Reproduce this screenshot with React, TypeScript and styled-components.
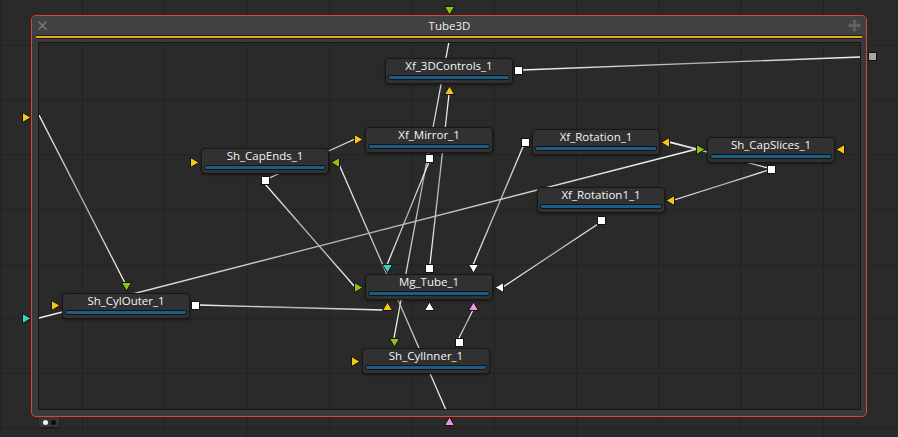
import React from 'react'
import styled, { createGlobalStyle } from 'styled-components'

// page coords of the inner (padding box) origin of the group
const OX = 39
const OY = 43

const GlobalStyle = createGlobalStyle`
  html, body {
    margin: 0;
    padding: 0;
    background: #2a2a2a;
  }
  body {
    font-family: 'Open Sans', 'Noto Sans', sans-serif;
  }
`

const gridBg = `
  background-color: #2a2a2a;
  background-image: linear-gradient(to right, #222222 1px, transparent 1px),
    linear-gradient(to bottom, #222222 1px, transparent 1px);
  background-size: 82.33px 54.7px;
`

const Canvas = styled.div`
  position: relative;
  width: 898px;
  height: 437px;
  overflow: hidden;
  ${gridBg}
  background-position: 82px 45px;
`

const GroupFrame = styled.div`
  position: absolute;
  left: 31px;
  top: 15px;
  width: 836px;
  height: 402px;
  box-sizing: border-box;
  display: flex;
  flex-direction: column;
  border: 1px solid #dc4439;
  border-radius: 5px;
  background: #3a3a3a;
`

const Header = styled.div`
  height: 19px;
  display: grid;
  grid-template-columns: 1fr auto 1fr;
  align-items: center;
  padding: 0 5px 0 6px;
  background: #414141;
  border-radius: 4px 4px 0 0;
`

const Title = styled.div`
  color: #f0f0f0;
  font-size: 11.5px;
  line-height: 19px;
`

const HeaderIcon = styled.div<{ $end?: boolean }>`
  display: flex;
  justify-content: ${({ $end }) => ($end ? 'flex-end' : 'flex-start')};
  align-items: center;
`

const YellowBar = styled.div`
  height: 2px;
  margin: 0 4px;
  background: #e3aa17;
  border-top: 1px solid #1d1d1d;
  border-bottom: 1px solid #1d1d1d;
`

const Inner = styled.div`
  position: relative;
  flex: 1;
  margin: 3px 5px 6px 6px;
  border: 1px solid #161616;
  overflow: hidden;
  ${gridBg}
  background-position: 43px 2px;
`

const Wires = styled.svg`
  position: absolute;
  left: 0;
  top: 0;
`

const Node = styled.div<{ $x: number; $y: number }>`
  position: absolute;
  left: ${({ $x }) => $x - OX}px;
  top: ${({ $y }) => $y - OY}px;
  width: 128px;
  height: 26px;
  box-sizing: border-box;
  display: flex;
  flex-direction: column;
  padding: 0 2px;
  background: #313131;
  border: 1px solid #171717;
  border-radius: 4px;
  box-shadow: 0 1px 3px rgba(0, 0, 0, 0.45);
`

const NodeLabel = styled.div`
  height: 14px;
  line-height: 14px;
  font-size: 11.5px;
  color: #f4f4f4;
  text-align: center;
  white-space: nowrap;
`

const NodeBar = styled.div`
  height: 3px;
  margin-top: 2px;
  background: #1b5c88;
  border: 1px solid #121212;
  border-radius: 2px;
`

const PortBox = styled.svg<{ $x: number; $y: number }>`
  position: absolute;
  left: ${({ $x }) => $x - 5.5}px;
  top: ${({ $y }) => $y - 5.5}px;
  width: 11px;
  height: 11px;
  overflow: visible;
`

const Tab = styled.div`
  position: absolute;
  left: 39px;
  top: 417px;
  width: 20px;
  height: 10px;
  box-sizing: border-box;
  display: flex;
  align-items: center;
  justify-content: center;
  gap: 3px;
  background: #363636;
  border-radius: 0 0 3px 3px;
  box-shadow: 0 1px 2px rgba(0, 0, 0, 0.5);
`

const Dot = styled.span<{ $light?: boolean }>`
  width: 5px;
  height: 5px;
  border-radius: 50%;
  background: ${({ $light }) => ($light ? '#f4f4f4' : '#0c0c0c')};
`

type Shape = 'up' | 'down' | 'left' | 'right' | 'square'

const C = {
  yellow: '#f5c518',
  green: '#8cc414',
  teal: '#3fd2bb',
  pink: '#f293e4',
  white: '#ffffff',
  gray: '#a6a6a6',
}

const shapePoints: Record<Exclude<Shape, 'square'>, string> = {
  right: '1.5,0.5 10,5.5 1.5,10.5',
  left: '9.5,0.5 1,5.5 9.5,10.5',
  down: '0.5,1.5 10.5,1.5 5.5,10',
  up: '0.5,9.5 10.5,9.5 5.5,1',
}

const Port = ({ x, y, shape, color }: { x: number; y: number; shape: Shape; color: string }) => (
  <PortBox $x={x} $y={y} viewBox="0 0 11 11">
    {shape === 'square' ? (
      <rect x={1.5} y={1.5} width={8} height={8} fill={color} stroke="#121212" strokeWidth={1} />
    ) : (
      <polygon points={shapePoints[shape]} fill={color} stroke="#121212" strokeWidth={1} strokeLinejoin="round" />
    )}
  </PortBox>
)

const nodes = [
  { name: 'Xf_3DControls_1', x: 385, y: 58 },
  { name: 'Xf_Mirror_1', x: 365, y: 127 },
  { name: 'Sh_CapEnds_1', x: 201, y: 148 },
  { name: 'Xf_Rotation_1', x: 532, y: 129 },
  { name: 'Sh_CapSlices_1', x: 707, y: 137 },
  { name: 'Xf_Rotation1_1', x: 537, y: 187 },
  { name: 'Mg_Tube_1', x: 365, y: 274 },
  { name: 'Sh_CylInner_1', x: 362, y: 348 },
  { name: 'Sh_CylOuter_1', x: 62, y: 293 },
]

// ports that sit on nodes, page coords of their centre
const nodePorts: { x: number; y: number; shape: Shape; color: string }[] = [
  { x: 518, y: 70, shape: 'square', color: C.white },
  { x: 449, y: 90, shape: 'up', color: C.yellow },
  { x: 358, y: 139, shape: 'right', color: C.yellow },
  { x: 429.5, y: 158, shape: 'square', color: C.white },
  { x: 194, y: 162, shape: 'right', color: C.yellow },
  { x: 335, y: 162, shape: 'left', color: C.green },
  { x: 265, y: 180, shape: 'square', color: C.white },
  { x: 525.5, y: 142, shape: 'square', color: C.white },
  { x: 665.5, y: 142, shape: 'left', color: C.yellow },
  { x: 700, y: 149.5, shape: 'right', color: C.green },
  { x: 840.5, y: 149.5, shape: 'left', color: C.yellow },
  { x: 771, y: 169, shape: 'square', color: C.white },
  { x: 670.5, y: 200, shape: 'left', color: C.yellow },
  { x: 601, y: 220, shape: 'square', color: C.white },
  { x: 387, y: 268, shape: 'down', color: C.teal },
  { x: 429.5, y: 268, shape: 'square', color: C.white },
  { x: 473, y: 268, shape: 'down', color: C.white },
  { x: 358, y: 287, shape: 'right', color: C.green },
  { x: 499, y: 287, shape: 'left', color: C.white },
  { x: 387, y: 306, shape: 'up', color: C.yellow },
  { x: 429.5, y: 306, shape: 'up', color: C.white },
  { x: 473, y: 306, shape: 'up', color: C.pink },
  { x: 394, y: 342, shape: 'down', color: C.green },
  { x: 459.5, y: 342, shape: 'square', color: C.white },
  { x: 355, y: 361, shape: 'right', color: C.yellow },
  { x: 126, y: 286, shape: 'down', color: C.green },
  { x: 55, y: 305, shape: 'right', color: C.yellow },
  { x: 195.5, y: 305.5, shape: 'square', color: C.white },
]

// group inputs / outputs outside the frame
const groupPorts: { x: number; y: number; shape: Shape; color: string }[] = [
  { x: 449, y: 10, shape: 'down', color: C.green },
  { x: 449, y: 421.5, shape: 'up', color: C.pink },
  { x: 26.5, y: 117, shape: 'right', color: C.yellow },
  { x: 26.5, y: 318, shape: 'right', color: C.teal },
  { x: 872, y: 56.5, shape: 'square', color: C.gray },
]

const wires: [number, number, number, number][] = [
  [450, 36, 394, 338],
  [449, 94, 430, 264],
  [429, 162, 387, 265],
  [338, 162, 449, 417],
  [265, 184, 355, 287],
  [265, 180, 355, 139],
  [525, 142, 473, 265],
  [669, 142, 697, 149],
  [39, 318, 697, 149],
  [772, 169, 674, 200],
  [772, 169, 669, 142],
  [601, 222, 503, 287],
  [199, 305, 383, 310],
  [39, 115, 125, 283],
  [522, 70, 860, 57],
  [473, 310, 459, 338],
]

const CloseIcon = () => (
  <svg width="9" height="9" viewBox="0 0 9 9">
    <path d="M1 1 L8 8 M8 1 L1 8" stroke="#7c7c7c" strokeWidth="1.4" strokeLinecap="round" />
  </svg>
)

const MoveIcon = () => (
  <svg width="13" height="13" viewBox="0 0 13 13">
    <g fill="#646464">
      <polygon points="6.5,0 9.5,3 3.5,3" />
      <polygon points="6.5,13 9.5,10 3.5,10" />
      <polygon points="0,6.5 3,3.5 3,9.5" />
      <polygon points="13,6.5 10,3.5 10,9.5" />
      <rect x="5.6" y="2.5" width="1.8" height="8" />
      <rect x="2.5" y="5.6" width="8" height="1.8" />
      <circle cx="6.5" cy="6.5" r="2.2" />
    </g>
  </svg>
)

const App = () => {
  return (
    <>
      <GlobalStyle />
      <Canvas>
        <GroupFrame>
          <Header>
            <HeaderIcon>
              <CloseIcon />
            </HeaderIcon>
            <Title>Tube3D</Title>
            <HeaderIcon $end>
              <MoveIcon />
            </HeaderIcon>
          </Header>
          <YellowBar />
          <Inner>
            <Wires width={821} height={366} viewBox={`${OX} ${OY} 821 366`}>
              <defs>
                {wires.map(([x1, y1, x2, y2], i) => (
                  <linearGradient
                    key={i}
                    id={`wire${i}`}
                    gradientUnits="userSpaceOnUse"
                    x1={x1}
                    y1={y1}
                    x2={x2}
                    y2={y2}
                  >
                    <stop offset="0" stopColor="#f4f4f4" />
                    <stop offset="0.5" stopColor="#b0b0b0" />
                    <stop offset="1" stopColor="#f4f4f4" />
                  </linearGradient>
                ))}
              </defs>
              {wires.map(([x1, y1, x2, y2], i) => (
                <line key={i} x1={x1} y1={y1} x2={x2} y2={y2} stroke={`url(#wire${i})`} strokeWidth={1.3} />
              ))}
            </Wires>
            {nodes.map((n) => (
              <Node key={n.name} $x={n.x} $y={n.y}>
                <NodeLabel>{n.name}</NodeLabel>
                <NodeBar />
              </Node>
            ))}
            {nodePorts.map((p, i) => (
              <Port key={i} x={p.x - OX} y={p.y - OY} shape={p.shape} color={p.color} />
            ))}
          </Inner>
        </GroupFrame>
        {groupPorts.map((p, i) => (
          <Port key={i} x={p.x} y={p.y} shape={p.shape} color={p.color} />
        ))}
        <Tab>
          <Dot $light />
          <Dot />
        </Tab>
      </Canvas>
    </>
  )
}

export default App
